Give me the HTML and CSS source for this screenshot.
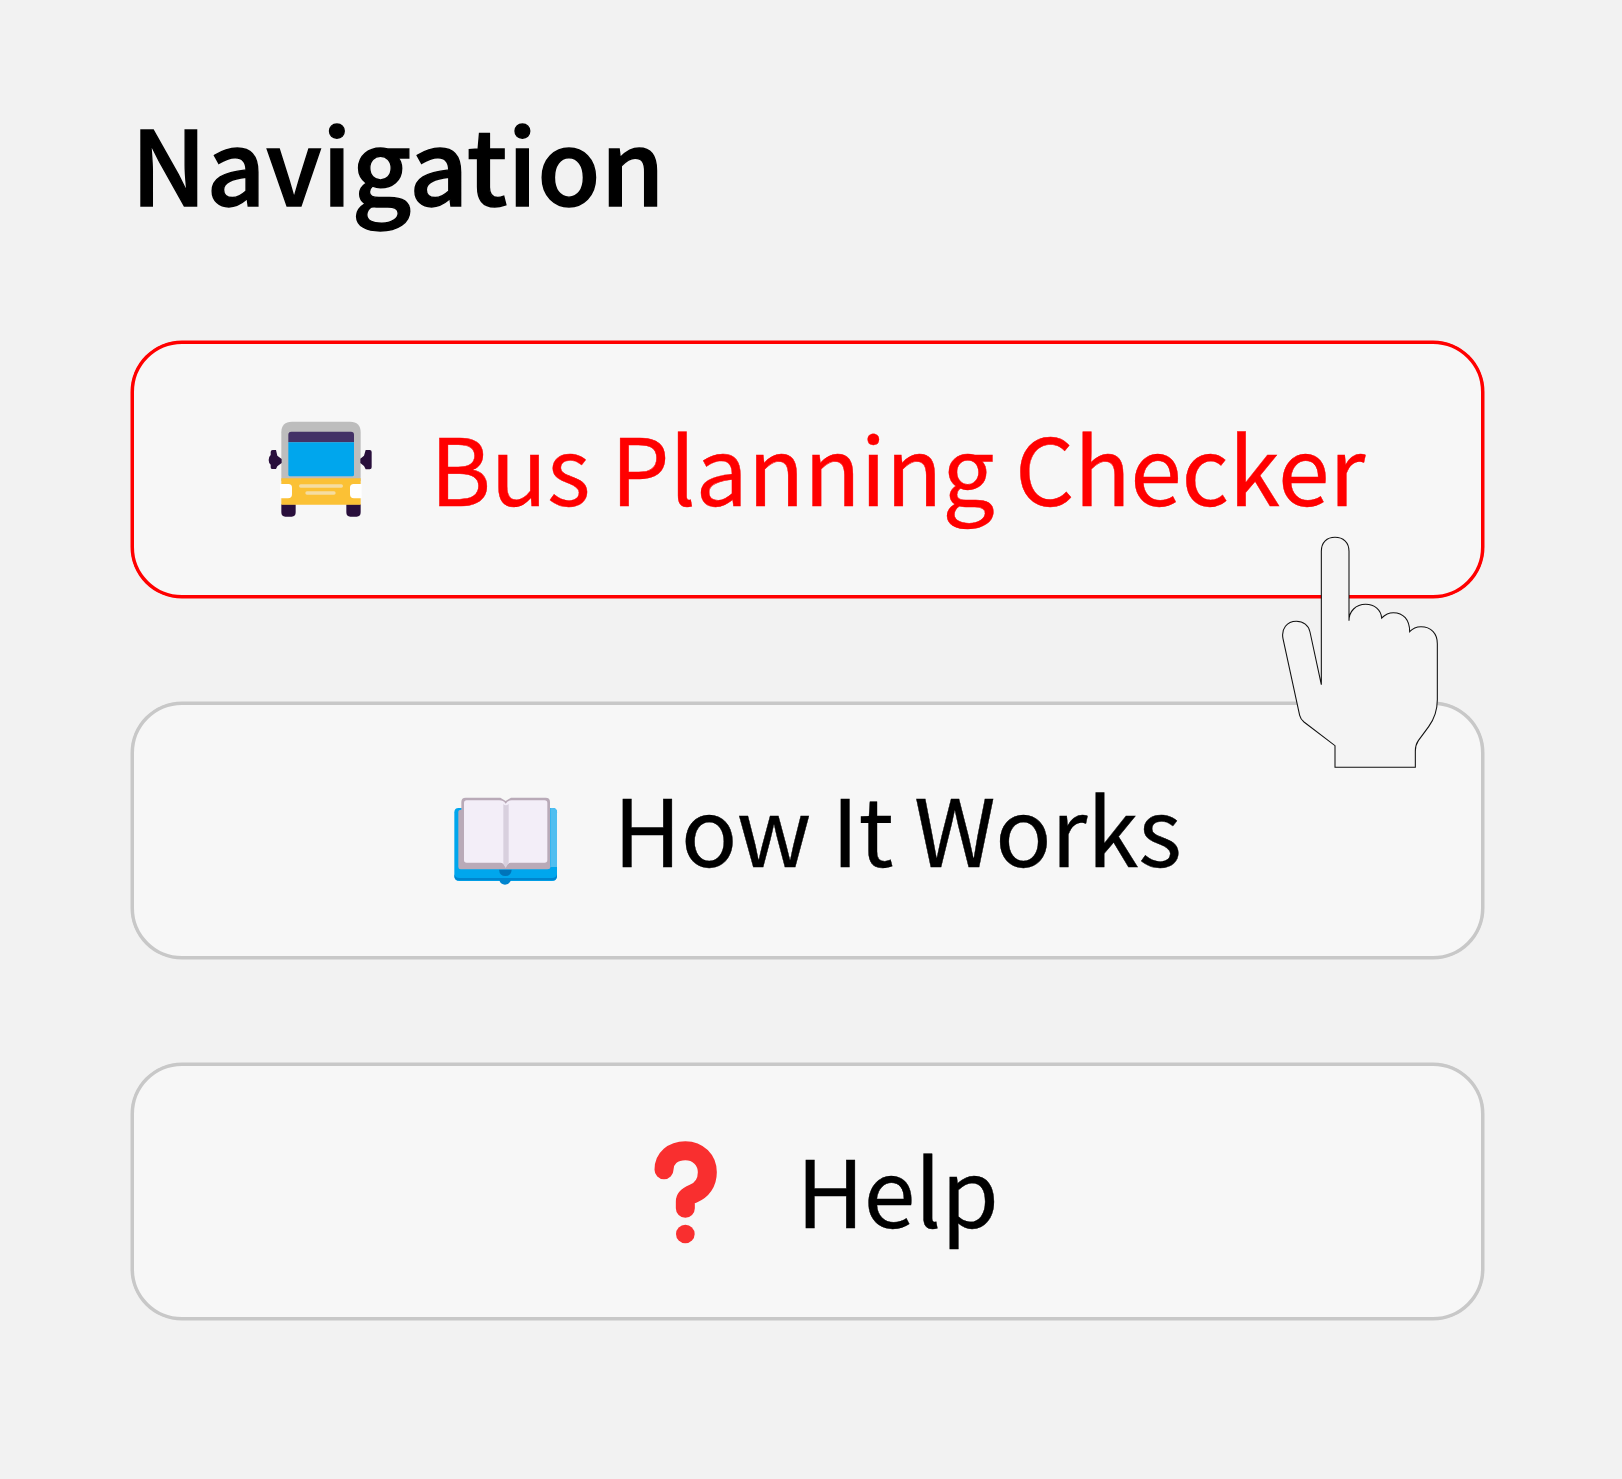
FILE: index.html
```html
<!DOCTYPE html>
<html lang="en">
<head>
<meta charset="utf-8">
<title>Navigation</title>
<link rel="stylesheet" href="styles.css">
</head>
<body>
<nav class="sidebar">
  <h2 class="title">Navigation</h2>
  <div class="links">
    <a class="link link-active">
      <svg class="icon" viewBox="0 2 411 420">
        <path d="M94 315h43v24q0 13-12 13h-19q-12 0-12-13zM289 315h43v24q0 13-12 13h-19q-12 0-12-13z" fill="#290f3c"/>
        <path d="M94 245V99q0-32 32-32h174q32 0 32 32v146z" fill="#bdbdbd"/>
        <path d="M94 237h238v79H94z" fill="#fbc135"/>
        <path d="M115 129V106q0-9 9-9h179q9 0 9 9v23z" fill="#433166"/>
        <path d="M115 129h197v97q0 5-5 5H120q-5 0-5-5z" fill="#00a6ed"/>
        <path d="M90 254h25q11 0 11 11v20q0 12-12 12H90zM335 254h-24q-11 0-11 11v20q0 12 12 12h23z" fill="#fff"/>
        <path d="M152 260h122M171 281h81" stroke="#f5dda1" stroke-width="10" stroke-linecap="round"/>
        <path d="M78 152l4 17 13 10v12l-13 10-4 8H66q-4 0-4-5v-8q-6-4-6-14t6-15v-9q0-6 6-6zM347 152h12q6 0 6 6v46q0 6-6 6h-12l-5-10-11-9v-13l11-9z" fill="#290f3c"/>
      </svg>
      <span class="label">Bus Planning Checker</span>
    </a>
    <a class="link">
      <svg class="icon" viewBox="-20 -56 411 420">
        <path d="M54 85h282q13 0 13 13v191q0 15-15 15H56q-15 0-15-15V98q0-13 13-13z" fill="#00a6ed"/>
        <path d="M329 85h7q13 0 13 13v164h-20z" fill="#50bef0"/>
        <path d="M41 284q2 11 15 11h278q13 0 15-11v4q0 14-15 14H211q-5 13-18 13t-17-13H56q-15 0-15-14z" fill="#0084ce"/>
        <path d="M175 270h38q-2 19-19 19t-19-19z" fill="#0074ba"/>
        <path d="M62 67q0-13 13-13h104l16 10 16-10h104q13 0 13 13v190q4 12-8 12H60q-7 0-7-7V96q0-6 9-6z" fill="#b9aab8"/>
        <path d="M70 70q0-8 8-8h98q12 0 19 10 7-10 18-10h99q8 0 8 8v171q0 8-8 8H210q-8 0-15 12-7-12-16-12H78q-8 0-8-8z" fill="#f3eef8"/>
        <path d="M188 73q7 8 16 0v176l-9 16-7-12z" fill="#d8d0de"/>
      </svg>
      <span class="label">How It Works</span>
    </a>
    <a class="link">
      <svg class="icon" viewBox="-73 -25 411 420">
        <path d="M71 118C71 84 98 61 135 61c38 0 66 28 66 65 0 32-17 54-42 64-15 6-24 12-24 24v20" fill="none" stroke="#f92f2f" stroke-width="57" stroke-linecap="round"/>
        <circle cx="135" cy="311" r="28" fill="#f92f2f"/>
      </svg>
      <span class="label">Help</span>
    </a>
  </div>
</nav>
<svg class="pointer" viewBox="0 0 540 765">
  <path d="M154 479V79c0-28 17-42 41-42s42 14 42 42v208c0-28 20-49 50-49 27 0 46 17 48 41 10-10 21-16 35-16 30 0 49 21 49 57 8-9 21-15 34-15 30 0 49 20 49 51v168c0 31-9 57-26 81l-31 42c-6 9-9 19-9 31v49H195v-65l-93-71q-10-8-13-20L39 341c-6-30 12-52 40-52 21 0 37 12 41 32z" fill="#f4f4f4" stroke="#111" stroke-width="3.200"/>
</svg>
</body>
</html>
```

FILE: styles.css
```css
* { box-sizing: border-box; }
body {
  margin: 0;
  position: relative;
  min-height: 1479px;
  background: #f2f2f2;
  color: #000;
  font-family: "Noto Sans CJK SC", "Noto Sans", sans-serif;
}
.sidebar { padding: 82px 138px 0 131px; }
.title {
  margin: 0 0 99px 0;
  height: 160px;
  font-size: 103px;
  font-weight: 500;
  line-height: 160px;
  -webkit-text-stroke: 1.4px currentColor;
}
.links { display: flex; flex-direction: column; gap: 104px; }
.link {
  display: flex;
  align-items: center;
  justify-content: center;
  gap: 43px;
  height: 257px;
  border: 3px solid #c8c8c8;
  border-radius: 51px;
  box-shadow: 0 0 0 0.5px #c8c8c8;
  background: #f7f7f7;
  font-size: 93px;
  line-height: 140px;
  letter-spacing: -0.27px;
  white-space: nowrap;
}
.link-active { border-color: #f00; box-shadow: 0 0 0 0.5px #f00; color: #f00; }
.label { padding-bottom: 7px; -webkit-text-stroke: 0.4px currentColor; }
.icon { width: 137px; height: 140px; flex: none; }
.pointer { position: absolute; left: 1270px; top: 525px; width: 180px; height: 255px; }
```
